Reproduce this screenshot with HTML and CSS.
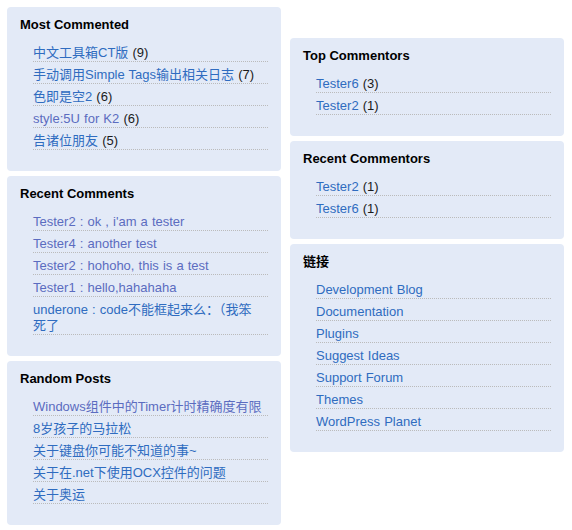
FILE: index.html
```html
<!DOCTYPE html>
<html>
<head>
<meta charset="utf-8">
<link rel="stylesheet" href="styles.css">
</head>
<body>
<div class="sidebar">
  <div class="col">
    <div class="module">
      <h2>Most Commented</h2>
      <ul>
        <li><a href="#">中文工具箱CT版</a> (9)</li>
        <li><a href="#">手动调用Simple Tags输出相关日志</a> (7)</li>
        <li><a href="#">色即是空2</a> (6)</li>
        <li><a href="#" class="visited">style:5U for K2</a> (6)</li>
        <li><a href="#">告诸位朋友</a> (5)</li>
      </ul>
    </div>
    <div class="module">
      <h2>Recent Comments</h2>
      <ul>
        <li><a href="#" class="visited">Tester2 : ok , i'am a tester</a></li>
        <li><a href="#" class="visited">Tester4 : another test</a></li>
        <li><a href="#" class="visited">Tester2 : hohoho, this is a test</a></li>
        <li><a href="#" class="visited">Tester1 : hello,hahahaha</a></li>
        <li><a href="#">underone : code不能框起来么：（我笨<br>死了</a></li>
      </ul>
    </div>
    <div class="module">
      <h2>Random Posts</h2>
      <ul>
        <li><a href="#" class="visited">Windows组件中的Timer计时精确度有限</a></li>
        <li><a href="#">8岁孩子的马拉松</a></li>
        <li><a href="#">关于键盘你可能不知道的事~</a></li>
        <li><a href="#">关于在.net下使用OCX控件的问题</a></li>
        <li><a href="#">关于奥运</a></li>
      </ul>
    </div>
  </div>
  <div class="col col-right">
    <div class="module">
      <h2>Top Commentors</h2>
      <ul>
        <li><a href="#">Tester6</a> (3)</li>
        <li><a href="#">Tester2</a> (1)</li>
      </ul>
    </div>
    <div class="module">
      <h2>Recent Commentors</h2>
      <ul>
        <li><a href="#">Tester2</a> (1)</li>
        <li><a href="#">Tester6</a> (1)</li>
      </ul>
    </div>
    <div class="module">
      <h2>链接</h2>
      <ul>
        <li><a href="#">Development Blog</a></li>
        <li><a href="#">Documentation</a></li>
        <li><a href="#">Plugins</a></li>
        <li><a href="#">Suggest Ideas</a></li>
        <li><a href="#">Support Forum</a></li>
        <li><a href="#">Themes</a></li>
        <li><a href="#">WordPress Planet</a></li>
      </ul>
    </div>
  </div>
</div>
</body>
</html>
```

FILE: styles.css
```css
body {
  margin: 7px;
  background: #ffffff;
  font-family: "Liberation Sans", Arial, "Noto Sans CJK SC", sans-serif;
  font-size: 13px;
  color: #1a1a1a;
}

.sidebar {
  display: flex;
  align-items: flex-start;
  gap: 9px;
}

.col {
  width: 274px;
  display: flex;
  flex-direction: column;
  gap: 5px;
}

.col-right {
  margin-top: 31px;
}

.module {
  background: #e3eaf7;
  border-radius: 4px;
  padding: 10px 13px;
}

.module h2 {
  margin: 0;
  font-size: 13px;
  line-height: 16px;
  font-weight: bold;
  color: #000000;
}

.module ul {
  list-style: none;
  margin: 7px 0 11px 13px;
  padding: 0;
}

.module li {
  padding-top: 5px;
  line-height: 16px;
  border-bottom: 1px dotted #bbbbbb;
  word-spacing: 0.5px;
}

.module a {
  color: #2f6cc0;
  text-decoration: none;
}

.module a.visited {
  color: #5b6cc0;
}
```
